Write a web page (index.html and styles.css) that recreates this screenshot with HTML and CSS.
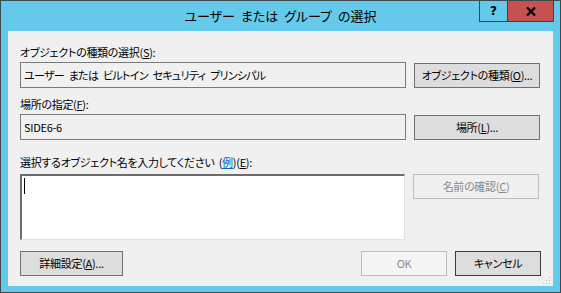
FILE: index.html
```html
<!DOCTYPE html>
<html lang="ja">
<head>
    <meta charset="utf-8">
    <title>ユーザー または グループ の選択</title>
    <link rel="stylesheet" href="styles.css">
</head>
<body>
    <div class="window">
        <!-- Title bar -->
        <div class="titlebar">
            <div></div>
            <div class="title">ユーザー または グループ の選択</div>
            <div class="caption-buttons">
                <div class="cap-btn help">?</div>
                <div class="cap-btn close">
                    <svg width="10" height="9" viewBox="0 0 10 9">
                        <path d="M1 0.5 L9 8.5 M9 0.5 L1 8.5" stroke="#000" stroke-width="2.2"/>
                    </svg>
                </div>
            </div>
        </div>

        <!-- Client area -->
        <div class="client">
            <div class="label">オブジェクトの種類の選択(<u>S</u>):</div>
            <div class="row">
                <div class="field long">ユーザー または ビルトイン セキュリティ プリンシパル</div>
                <div class="btn">オブジェクトの種類(<u>O</u>)...</div>
            </div>

            <div class="label second">場所の指定(<u>F</u>):</div>
            <div class="row">
                <div class="field">SIDE6-6</div>
                <div class="btn">場所(<u>L</u>)...</div>
            </div>

            <div class="label third">選択するオブジェクト名を入力してください (<a class="link">例</a>)(<u>E</u>):</div>
            <div class="row top">
                <div class="textarea"><span class="caret"></span></div>
                <div class="btn disabled">名前の確認(<u>C</u>)</div>
            </div>

            <div class="bottom-row">
                <div class="btn small">詳細設定(<u>A</u>)...</div>
                <div class="spacer"></div>
                <div class="btn small disabled">OK</div>
                <div class="btn small default">キャンセル</div>
            </div>

            <svg class="grip" width="9" height="9" viewBox="0 0 9 9">
                <rect x="7" y="1" width="1" height="1" fill="#b8b8b8"/>
                <rect x="4" y="4" width="1" height="1" fill="#b8b8b8"/>
                <rect x="7" y="4" width="1" height="1" fill="#b8b8b8"/>
                <rect x="1" y="7" width="1" height="1" fill="#b8b8b8"/>
                <rect x="4" y="7" width="1" height="1" fill="#b8b8b8"/>
                <rect x="7" y="7" width="1" height="1" fill="#b8b8b8"/>
            </svg>
        </div>
    </div>
</body>
</html>
```

FILE: styles.css
```css
/* Windows 8 style dialog */
body {
    margin: 0;
    font-family: "Noto Sans CJK JP", "Noto Sans", sans-serif;
    font-size: 11px;
    font-feature-settings: "palt" 1;
    color: #000;
}

.window {
    width: 559px;
    height: 291px;
    border: 1px solid #3d4a50;
    background-color: #64c9ea;
    display: flex;
    flex-direction: column;
}

.titlebar {
    height: 30px;
    display: grid;
    grid-template-columns: 1fr auto 1fr;
}

.title {
    font-size: 13px;
    line-height: 24px;
    padding-top: 3px;
    word-spacing: 3px;
    white-space: nowrap;
    color: #000;
}

.caption-buttons {
    display: flex;
    justify-content: flex-end;
    align-items: flex-start;
    padding-right: 6px;
}

.cap-btn {
    height: 20px;
    border: 1px solid #404040;
    border-top: none;
    display: flex;
    align-items: center;
    justify-content: center;
    font-family: "DejaVu Sans", sans-serif;
    font-weight: bold;
    font-size: 12px;
}

.help {
    width: 27px;
    border-right: none;
}

.close {
    width: 45px;
    background-color: #c75050;
}

.client {
    position: relative;
    margin: 0 7px 0 7px;
    height: 255px;
    background-color: #f0f0f0;
    padding: 0 12px;
    letter-spacing: -0.3px;
    word-spacing: 2px;
    white-space: nowrap;
}

.label {
    line-height: 16px;
    margin-top: 13px;
    margin-bottom: 2px;
}

.label.second {
    margin-top: 8px;
}

.label.third {
    margin-top: 14px;
    margin-bottom: 4px;
}

.link {
    color: #0066cc;
    text-decoration: underline;
}

.row {
    display: flex;
    align-items: center;
    gap: 8px;
}

.row.top {
    align-items: flex-start;
}

.field {
    width: 381px;
    height: 24px;
    border: 1px solid #7a7a7a;
    line-height: 24px;
    padding-left: 3px;
}

.field.long {
    letter-spacing: -0.7px;
    word-spacing: 3px;
}

.btn {
    width: 124px;
    height: 23px;
    border: 1px solid #707070;
    background-color: #dddddd;
    text-align: center;
    line-height: 23px;
}

.btn.disabled {
    color: #8a8a8a;
    border-color: #bcbcbc;
    background-color: #f0f0f0;
}

.textarea {
    width: 385px;
    height: 66px;
    background-color: #fff;
    border-top: 2px solid #6d6d6d;
    border-left: 2px solid #6d6d6d;
    border-right: 1px solid #e3e3e3;
    border-bottom: 1px solid #e3e3e3;
    padding: 2px 0 0 2px;
    box-sizing: border-box;
}

.caret {
    display: block;
    width: 1px;
    height: 16px;
    background-color: #000;
}

.bottom-row {
    display: flex;
    margin-top: 11px;
    gap: 8px;
}

.btn.small {
    width: 101px;
}

.btn.small.disabled,
.btn.small.default {
    width: 84px;
}

.btn.small.disabled {
    background-color: #f4f4f4;
}

.btn.default {
    border-color: #3c3c3c;
}

.spacer {
    flex: 1;
}

.grip {
    position: absolute;
    right: 2px;
    bottom: 1px;
}
```
